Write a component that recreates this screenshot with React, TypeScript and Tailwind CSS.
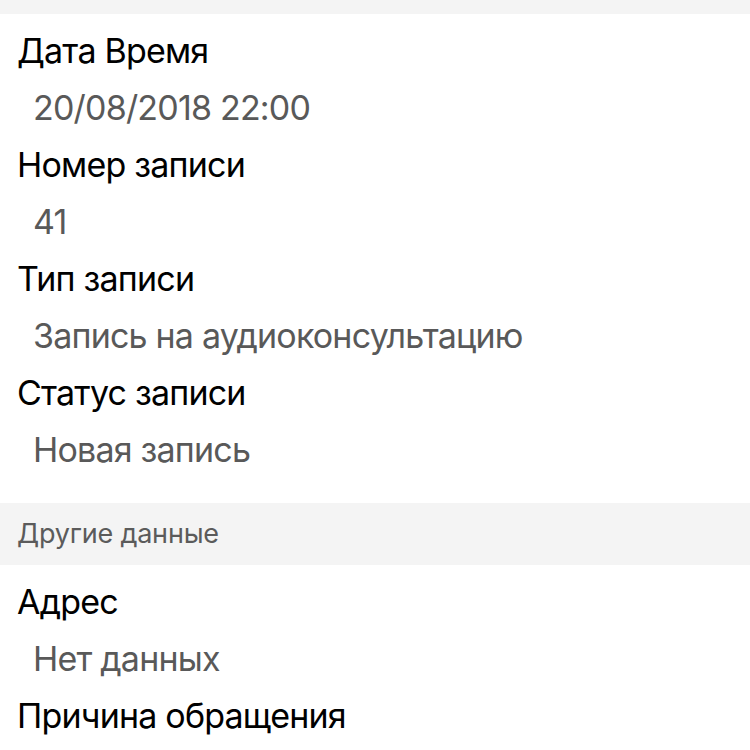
import React from "react";

const font = { fontFamily: "Inter, 'Noto Sans', sans-serif" };

function Field({ label, value }: { label: string; value?: string }) {
  return (
    <div>
      <div className="h-[57px] flex items-center pl-[17px] text-[34px] text-black tracking-[-0.8px]">
        {label}
      </div>
      {value !== undefined && (
        <div className="h-[57px] flex items-center pl-[33px] text-[34px] text-[#595959] tracking-[-0.8px]">
          {value}
        </div>
      )}
    </div>
  );
}

export default function App() {
  return (
    <div className="w-[750px] h-[750px] overflow-hidden bg-white" style={font}>
      <div className="h-[14px] bg-[#f4f4f4]" />
      <div className="pt-[8px] pb-[25px]">
        <Field label="Дата Время" value="20/08/2018 22:00" />
        <Field label="Номер записи" value="41" />
        <Field label="Тип записи" value="Запись на аудиоконсультацию" />
        <Field label="Статус записи" value="Новая запись" />
      </div>
      <div className="h-[62px] bg-[#f4f4f4] flex items-center pl-[17px] text-[27px] text-[#5b5b5b] tracking-[-0.2px]">
        Другие данные
      </div>
      <div className="pt-[8px]">
        <Field label="Адрес" value="Нет данных" />
        <Field label="Причина обращения" />
      </div>
    </div>
  );
}
